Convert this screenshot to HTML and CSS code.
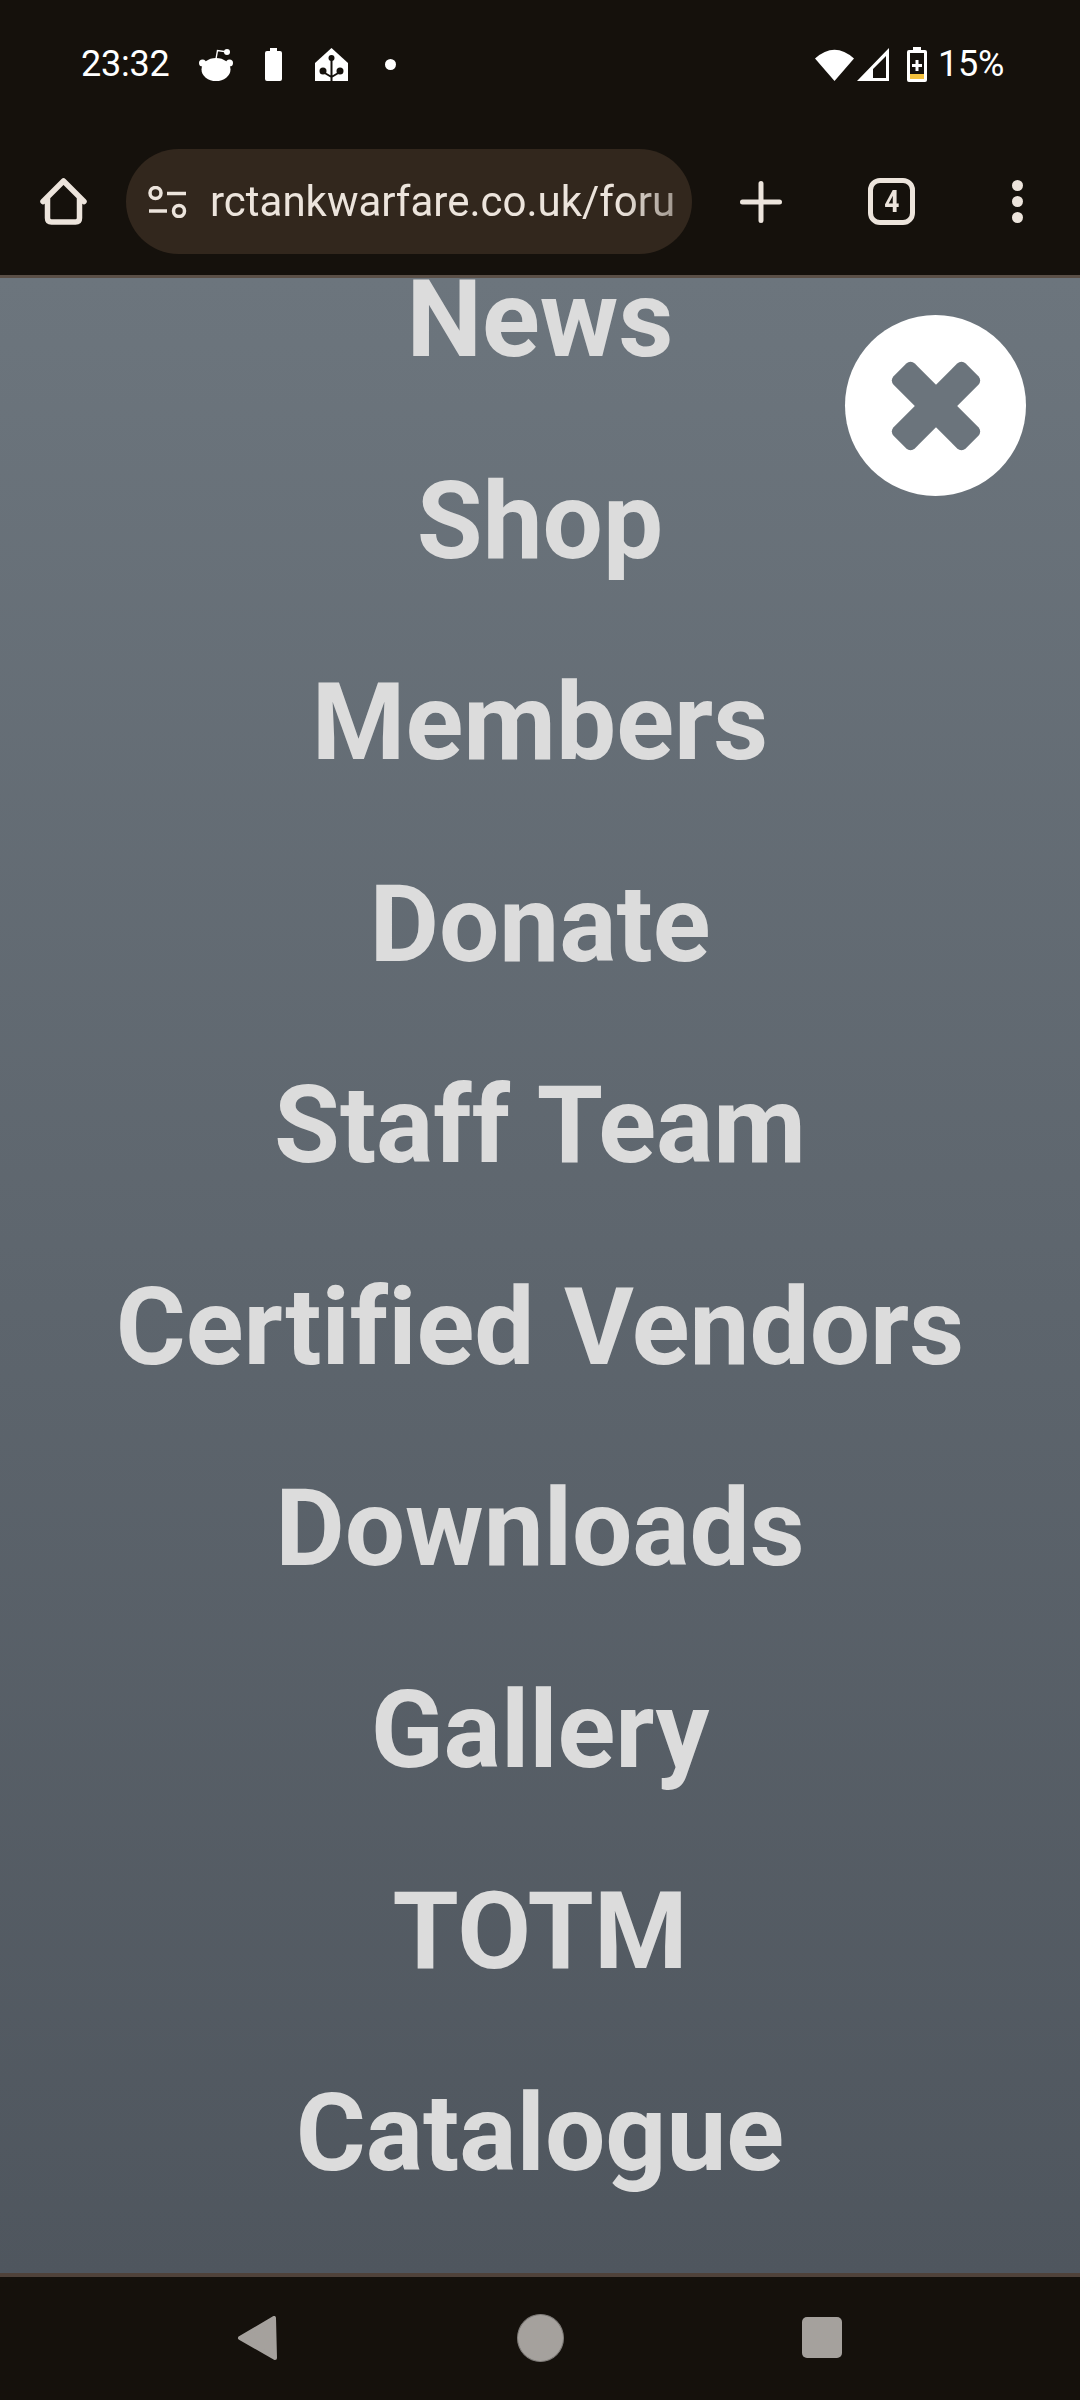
FILE: index.html
```html
<!DOCTYPE html>
<html>
<head>
    <title>RC Tank Warfare</title>
    <link rel="stylesheet" href="styles.css">
</head>
<body>
    <div class="phone">
        <header class="top-bar">
            <div class="status-bar">
                <span class="clock">23:32</span>
                <svg class="icon-reddit" width="34" height="33" viewBox="0 0 34 33">
                    <circle cx="3.5" cy="15" r="3.5" fill="#fff"/>
                    <circle cx="30.5" cy="15" r="3.5" fill="#fff"/>
                    <ellipse cx="17" cy="21.5" rx="14.5" ry="11.5" fill="#fff"/>
                    <path d="M17 11 L18.5 2.5 L27 3.8" fill="none" stroke="#fff" stroke-width="1.4"/>
                    <circle cx="28" cy="4" r="3" fill="#fff"/>
                </svg>
                <svg class="icon-battery" width="17" height="33" viewBox="0 0 17 33">
                    <path d="M5 0 H12 V3 H15 Q17 3 17 5 V31 Q17 33 15 33 H2 Q0 33 0 31 V5 Q0 3 2 3 H5 Z" fill="#fff"/>
                </svg>
                <svg class="icon-home-app" width="33" height="33" viewBox="0 0 33 33">
                    <path d="M16.5 0 L33 15 V33 H0 V15 Z" fill="#fff"/>
                    <path d="M16.5 10 V33 M16.5 29 L8 24 M16.5 29 L25 24" fill="none" stroke="#15110c" stroke-width="2"/>
                    <circle cx="16.5" cy="10" r="3" fill="#15110c"/>
                    <circle cx="8" cy="23" r="3.5" fill="#15110c"/>
                    <circle cx="25" cy="23" r="3.5" fill="#15110c"/>
                </svg>
                <span class="status-dot"></span>
                <div class="status-right">
                    <svg width="39" height="33" viewBox="0 0 39 33">
                        <path d="M0 10.5 Q19.5 -7 39 10.5 L19.5 33 Z" fill="#fff"/>
                    </svg>
                    <svg class="icon-signal" width="32" height="33" viewBox="0 0 32 33">
                        <path d="M32 0 V33 H0 Z M29 8 L16 21 V30 H29 Z" fill="#fff" fill-rule="evenodd"/>
                    </svg>
                    <svg class="icon-charge" width="20" height="35" viewBox="0 0 20 35">
                        <path d="M6 0 H14 V3 H18 Q20 3 20 5 V33 Q20 35 18 35 H2 Q0 35 0 33 V5 Q0 3 2 3 H6 Z" fill="#fff"/>
                        <rect x="3" y="6" width="14" height="26" fill="#15110c"/>
                        <rect x="3" y="27" width="14" height="5" fill="#f4c13c"/>
                        <path d="M8.5 13 H11.5 V17 H15 V20 H11.5 V24 H8.5 V20 H5 V17 H8.5 Z" fill="#fff"/>
                    </svg>
                    <span class="battery-text">15%</span>
                </div>
            </div>
            <div class="toolbar">
                <svg class="icon-home" width="47" height="47" viewBox="0 0 47 47">
                    <path d="M3 23.5 L23.5 3 L44 23.5 M7.5 19 V40 Q7.5 44 11.5 44 H35.5 Q39.5 44 39.5 40 V19" fill="none" stroke="#ece4dc" stroke-width="5.5" stroke-linecap="round" stroke-linejoin="round"/>
                </svg>
                <div class="url-pill">
                    <svg class="icon-tune" width="40" height="32" viewBox="0 0 40 32">
                        <circle cx="7.5" cy="7" r="5.5" fill="none" stroke="#ece4dc" stroke-width="3.5"/>
                        <path d="M19 7.5 H38 M1 25 H19" stroke="#ece4dc" stroke-width="3.5"/>
                        <circle cx="31" cy="25" r="5.5" fill="none" stroke="#ece4dc" stroke-width="3.5"/>
                    </svg>
                    <span class="url-text">rctankwarfare.co.uk/foru</span>
                </div>
                <svg class="icon-plus" width="42" height="42" viewBox="0 0 42 42">
                    <path d="M21 2.5 V39.5 M2.5 21 H39.5" stroke="#ece4dc" stroke-width="5" stroke-linecap="round"/>
                </svg>
                <div class="tab-count"><span>4</span></div>
                <div class="more-dots">
                    <span></span>
                    <span></span>
                    <span></span>
                </div>
            </div>
        </header>

        <main class="overlay">
            <nav class="menu">
                <a href="#">News</a>
                <a href="#">Shop</a>
                <a href="#">Members</a>
                <a href="#">Donate</a>
                <a href="#">Staff Team</a>
                <a href="#">Certified Vendors</a>
                <a href="#">Downloads</a>
                <a href="#">Gallery</a>
                <a href="#">TOTM</a>
                <a href="#">Catalogue</a>
            </nav>
            <button class="close-btn">
                <svg width="100" height="100" viewBox="0 0 100 100">
                    <rect x="-1" y="35" width="102" height="30" rx="6" fill="#6b747c" transform="rotate(45 50 50)"/>
                    <rect x="-1" y="35" width="102" height="30" rx="6" fill="#6b747c" transform="rotate(-45 50 50)"/>
                </svg>
            </button>
        </main>

        <footer class="nav-bar">
            <svg width="41" height="44" viewBox="0 0 41 44">
                <path d="M3 22 L37 2 L38 42 Z" fill="#a5a19d" stroke="#a5a19d" stroke-width="4" stroke-linejoin="round"/>
            </svg>
            <span class="nav-circle"></span>
            <span class="nav-square"></span>
        </footer>
    </div>
</body>
</html>
```

FILE: styles.css
```css
* {
    box-sizing: border-box;
}
body {
    margin: 0;
    background: #15110c;
    font-family: Roboto, sans-serif;
}
.phone {
    width: 1080px;
    height: 2400px;
    display: flex;
    flex-direction: column;
    overflow: hidden;
}
.top-bar {
    background: #15110c;
    border-bottom: 3px solid #5a4f47;
    height: 278px;
    flex-shrink: 0;
}
.status-bar {
    height: 128px;
    padding: 0 76px 0 81px;
    display: flex;
    align-items: center;
    color: #fff;
}
.clock {
    font-size: 36px;
    letter-spacing: -0.2px;
    width: 118px;
}
.icon-battery {
    margin-left: 32px;
}
.icon-home-app {
    margin-left: 33px;
}
.status-dot {
    width: 11px;
    height: 11px;
    border-radius: 50%;
    background: #fff;
    margin-left: 37px;
}
.status-right {
    margin-left: auto;
    display: flex;
    align-items: center;
}
.icon-signal {
    margin-left: 3px;
}
.icon-charge {
    margin-left: 18px;
}
.battery-text {
    font-size: 36px;
    letter-spacing: -0.3px;
    margin-left: 11px;
}
.toolbar {
    height: 147px;
    display: flex;
    align-items: center;
    padding-left: 40px;
}
.url-pill {
    width: 566px;
    height: 105px;
    margin-left: 39px;
    border-radius: 53px;
    background: #32271d;
    display: flex;
    align-items: center;
    padding-left: 22px;
    color: #ece4dc;
}
.url-text {
    font-size: 42px;
    margin-left: 22px;
    width: 465px;
    white-space: nowrap;
    overflow: hidden;
    -webkit-mask-image: linear-gradient(to right, #000 88%, rgba(0,0,0,0.6));
    mask-image: linear-gradient(to right, #000 88%, rgba(0,0,0,0.6));
}
.icon-plus {
    margin-left: 48px;
}
.tab-count {
    width: 47px;
    height: 47px;
    margin-left: 86px;
    border: 5px solid #ece4dc;
    border-radius: 12px;
    color: #ece4dc;
    font-size: 31px;
    font-weight: 700;
    display: flex;
    align-items: center;
    justify-content: center;
}
.tab-count span {
    transform: scaleX(0.85);
}
.more-dots {
    margin-left: 97px;
    display: flex;
    flex-direction: column;
    gap: 5px;
}
.more-dots span {
    width: 11px;
    height: 11px;
    border-radius: 50%;
    background: #ece4dc;
}
.overlay {
    position: relative;
    flex: 1;
    overflow: hidden;
    background: linear-gradient(to bottom, #6c757d, #4f565e);
}
.menu {
    display: flex;
    flex-direction: column;
    align-items: center;
    margin-top: -59px;
}
.menu a {
    height: 201.5px;
    line-height: 201px;
    font-size: 107px;
    font-weight: 700;
    font-variant-ligatures: none;
    word-spacing: 3px;
    color: #dcdcdc;
    text-decoration: none;
    white-space: nowrap;
}
.close-btn {
    position: absolute;
    top: 37px;
    left: 845px;
    width: 181px;
    height: 181px;
    padding: 0;
    border: none;
    border-radius: 50%;
    background: #fff;
    display: flex;
    align-items: center;
    justify-content: center;
}
.nav-bar {
    height: 127px;
    flex-shrink: 0;
    background: #15110c;
    border-top: 4px solid #4f423a;
    display: flex;
    align-items: center;
    padding: 0 0 2px 237px;
}
.nav-circle {
    width: 47px;
    height: 48px;
    border-radius: 50%;
    border: 1px solid #7f7c79;
    background: #a5a19d;
    margin-left: 239px;
}
.nav-square {
    width: 40px;
    height: 41px;
    border-radius: 5px;
    background: #a5a19d;
    margin-left: 238px;
}
```
